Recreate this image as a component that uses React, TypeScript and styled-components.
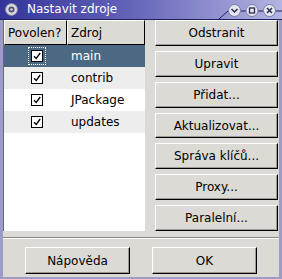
import React from "react";
import styled, { createGlobalStyle } from "styled-components";

const Global = createGlobalStyle`
  html, body { margin: 0; padding: 0; background: #dcdad5; }
  body { font-family: "DejaVu Sans", "Liberation Sans", sans-serif; font-size: 12px; color: #000; }
`;

const Window = styled.div`
  width: 282px;
  height: 279px;
  display: flex;
  flex-direction: column;
  background: #dcdad5;
  overflow: hidden;
`;

const TitleBar = styled.div`
  position: relative;
  height: 19px;
  flex: none;
  display: flex;
  align-items: center;
  gap: 9px;
  padding-left: 5px;
  background: linear-gradient(to right, #34349a 0%, #6262b8 45%, #b4b4e2 100%);
  border-bottom: 1px solid #20205e;
`;

const TitleText = styled.span`
  color: #fff;
  font-size: 12px;
  line-height: 19px;
`;

const TitleIcon = styled.svg`
  width: 13px;
  height: 13px;
  flex: none;
`;

const Decor = styled.svg`
  position: absolute;
  right: 0;
  top: 0;
`;

const Frame = styled.div`
  flex: 1;
  display: flex;
  flex-direction: column;
  border-left: 3px solid #9c9cc6;
  border-right: 3px solid #9c9cc6;
  border-bottom: 2px solid #9c9cc6;
`;

const Main = styled.div`
  height: 211px;
  display: flex;
  gap: 10px;
  padding-right: 1px;
`;

const Table = styled.div`
  width: 142px;
  background: #fff;
  display: flex;
  flex-direction: column;
  border-left: 1px solid #6c6a66;
  box-sizing: border-box;
`;

const Header = styled.div`
  display: grid;
  grid-template-columns: 63px 1fr;
  height: 25px;
  flex: none;
`;

const HeaderCell = styled.div<{ $pad: number }>`
  display: flex;
  align-items: center;
  padding-left: ${(p) => p.$pad}px;
  background: #dcdad5;
  border-top: 1px solid #fff;
  border-left: 1px solid #fff;
  border-right: 1px solid #000;
  border-bottom: 1px solid #000;
  box-sizing: border-box;
`;

const Row = styled.div<{ $bg: string; $selected?: boolean }>`
  display: grid;
  grid-template-columns: 63px 1fr;
  height: 22px;
  align-items: center;
  background: ${(p) => p.$bg};
  color: ${(p) => (p.$selected ? "#fff" : "#000")};
`;

const CheckCell = styled.div`
  display: flex;
  align-items: center;
  padding-left: 24px;
`;

const Focus = styled.div<{ $on?: boolean }>`
  padding: 2px;
  border: 1px dotted ${(p) => (p.$on ? "#fff" : "transparent")};
  display: flex;
`;

const Box = styled.div`
  width: 12px;
  height: 12px;
  box-sizing: border-box;
  border: 1px solid #000;
  background: #fff;
  display: flex;
  align-items: center;
  justify-content: center;
`;

const NameCell = styled.div`
  padding-left: 4px;
`;

const Buttons = styled.div`
  flex: 1;
  display: flex;
  flex-direction: column;
  gap: 5px;
`;

const Button = styled.div`
  height: 26px;
  box-sizing: border-box;
  display: flex;
  align-items: center;
  justify-content: center;
  background: #dcdad5;
  border-top: 1px solid #fff;
  border-left: 1px solid #fff;
  border-right: 1px solid #000;
  border-bottom: 1px solid #000;
  box-shadow: inset -1px -1px 0 #9d9a94;
  white-space: nowrap;
`;

const Separator = styled.div`
  margin-top: 6px;
  border-top: 1px solid #8a8782;
  border-bottom: 1px solid #fff;
`;

const Footer = styled.div`
  display: flex;
  justify-content: space-evenly;
  padding-top: 8px;
`;

const FooterButton = styled(Button)`
  height: 27px;
  width: 105px;
`;

const Check = () => (
  <svg width="10" height="10" viewBox="0 0 10 10">
    <path d="M2 5.2 L4.2 7.4 L8.2 2" stroke="#000" strokeWidth="1.3" fill="none" />
  </svg>
);

const rows = [
  { name: "main", bg: "#4b6983", selected: true },
  { name: "contrib", bg: "#ededed" },
  { name: "JPackage", bg: "#ffffff" },
  { name: "updates", bg: "#ededed" },
];

const actions = ["Odstranit", "Upravit", "Přidat...", "Aktualizovat...", "Správa klíčů...", "Proxy...", "Paralelní..."];

const CircleBtn = ({ cx, kind }: { cx: number; kind: "min" | "max" | "close" }) => (
  <g>
    <circle cx={cx} cy={10.5} r={6} fill="#e6e6f0" stroke="#7a7aa8" strokeWidth="1" />
    {kind === "min" && <path d={`M${cx - 3} ${9} L${cx} ${12} L${cx + 3} ${9}`} stroke="#2a2a50" strokeWidth="1.5" fill="none" />}
    {kind === "max" && <rect x={cx - 2.5} y={8} width={5} height={5} stroke="#2a2a50" strokeWidth="1.3" fill="none" />}
    {kind === "close" && (
      <path d={`M${cx - 2.5} ${8} L${cx + 2.5} ${13} M${cx + 2.5} ${8} L${cx - 2.5} ${13}`} stroke="#2a2a50" strokeWidth="1.5" fill="none" />
    )}
  </g>
);

export default function App() {
  return (
    <>
      <Global />
      <Window>
        <TitleBar>
          <TitleIcon viewBox="0 0 13 13">
            <circle cx="6.5" cy="6.5" r="6" fill="#d8d8e0" stroke="#8080a0" />
            <circle cx="6.5" cy="6.5" r="3" fill="#505070" />
            <circle cx="6.5" cy="6.5" r="1.2" fill="#d8d8e0" />
          </TitleIcon>
          <TitleText>Nastavit zdroje</TitleText>
          <Decor width="64" height="19" viewBox="218 0 64 19">
            <path d="M219 19 L228 11 L282 11" stroke="#20205e" strokeWidth="1" fill="none" />
            <CircleBtn cx={234.5} kind="min" />
            <CircleBtn cx={252} kind="max" />
            <CircleBtn cx={269.5} kind="close" />
          </Decor>
        </TitleBar>
        <Frame>
          <Main>
            <Table>
              <Header>
                <HeaderCell $pad={3}>Povolen?</HeaderCell>
                <HeaderCell $pad={3}>Zdroj</HeaderCell>
              </Header>
              {rows.map((r) => (
                <Row key={r.name} $bg={r.bg} $selected={r.selected}>
                  <CheckCell>
                    <Focus $on={r.selected}>
                      <Box>
                        <Check />
                      </Box>
                    </Focus>
                  </CheckCell>
                  <NameCell>{r.name}</NameCell>
                </Row>
              ))}
            </Table>
            <Buttons>
              {actions.map((a) => (
                <Button key={a}>{a}</Button>
              ))}
            </Buttons>
          </Main>
          <Separator />
          <Footer>
            <FooterButton>Nápověda</FooterButton>
            <FooterButton>OK</FooterButton>
          </Footer>
        </Frame>
      </Window>
    </>
  );
}
